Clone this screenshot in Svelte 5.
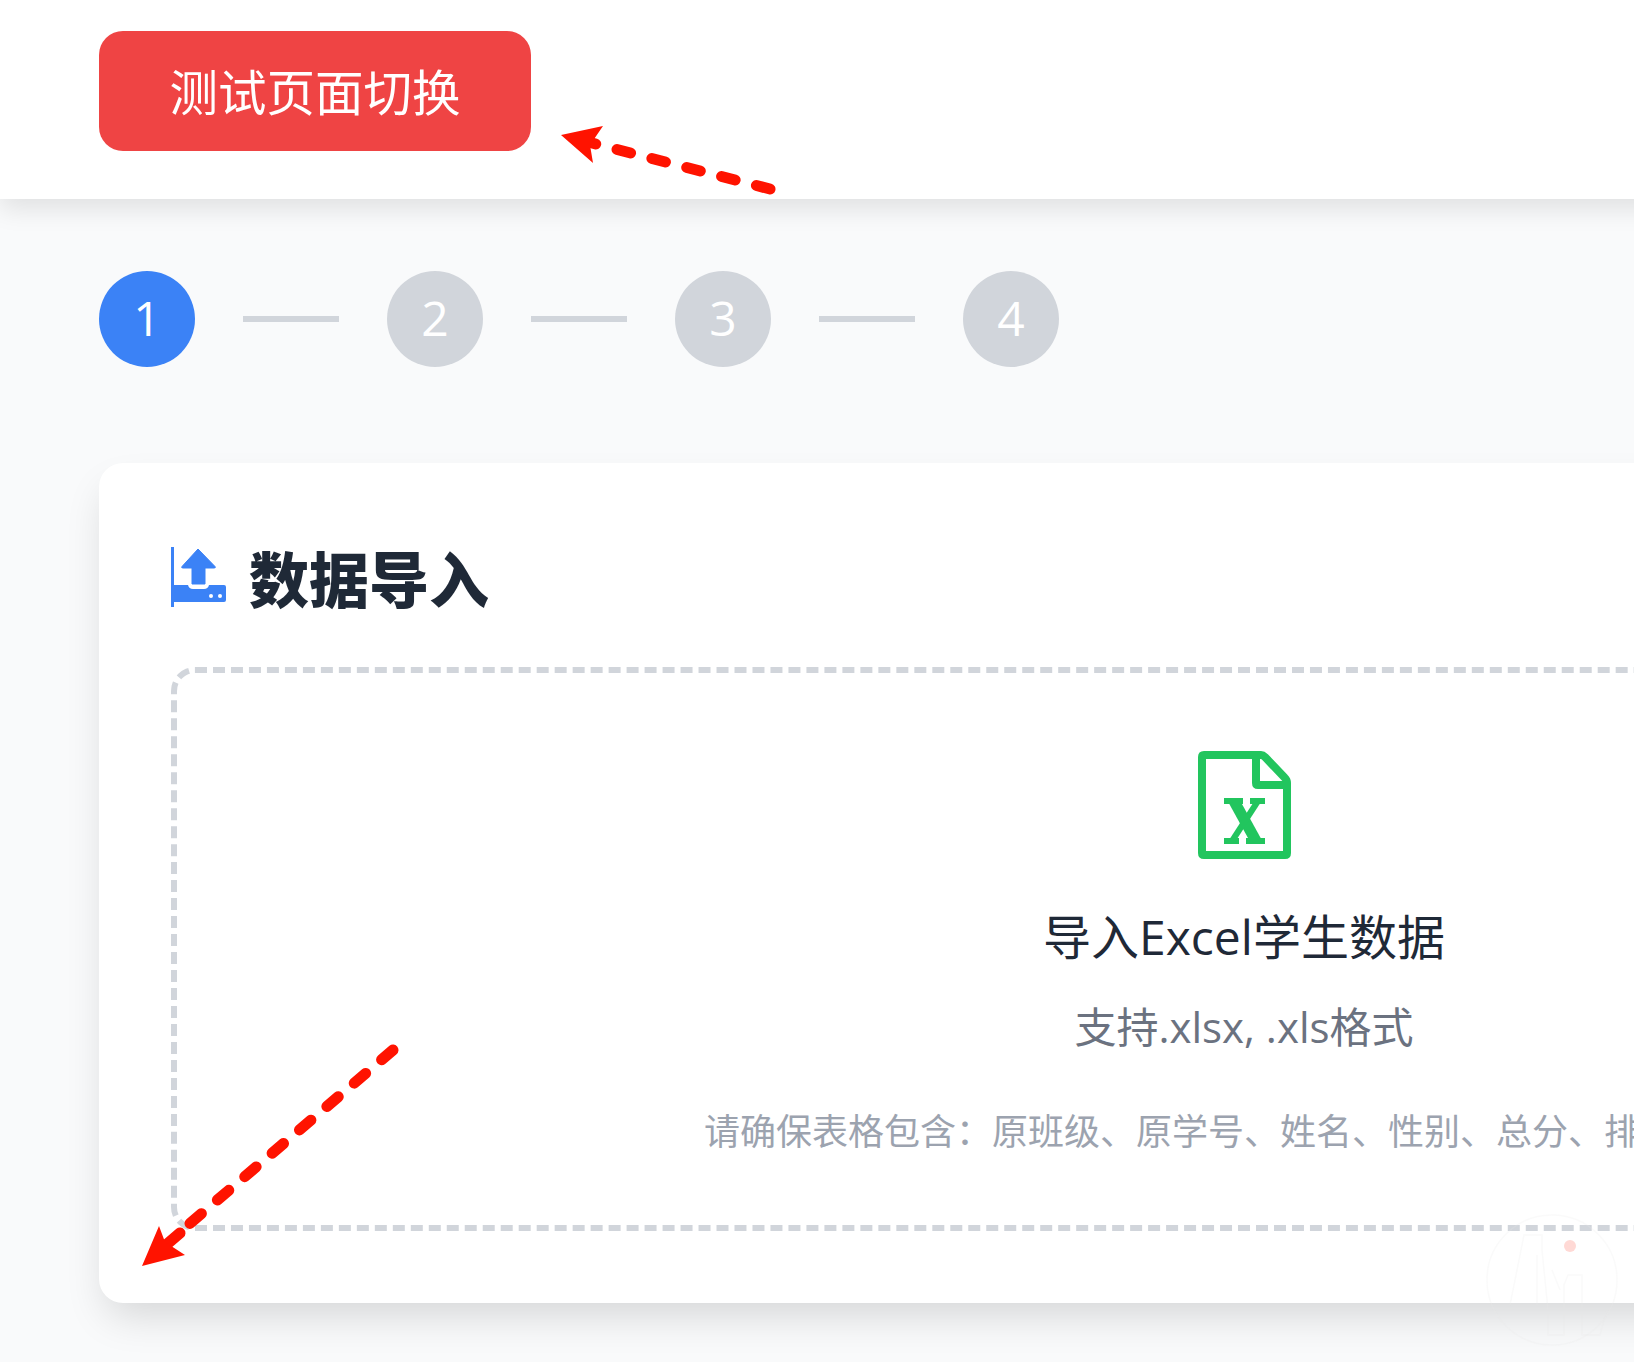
<script>
	var steps = [1, 2, 3, 4];
	var current = 1;
</script>

<div class="viewport">
	<div class="page">
		<header class="topbar">
			<button class="switch-btn"><span class="btn-label">测试页面切换</span></button>
		</header>

		<main class="content">
			<div class="steps">
				{#each steps as step, i}
					{#if i > 0}
						<span class="step-line"></span>
					{/if}
					<span class="step" class:active={step === current}><span class="step-num">{step}</span></span>
				{/each}
			</div>

			<section class="card">
				<h2 class="card-title">
					<svg class="title-icon" width="56" height="60" viewBox="0 0 56 60">
						<rect x="0" y="0" width="3" height="60" fill="#3b82f6" />
						<path d="M27 2 L44 19.500 Q45 21 43 21 H34 V37 H21 V21 H12 Q10 21 11 19.500 Z" fill="#3b82f6" stroke="#3b82f6" stroke-linejoin="round" />
						<path d="M0 38 H17 Q18 42 22 42 H33 Q37 42 38 38 H53 Q55 38 55 40 V53 Q55 55 53 55 H0 Z" fill="#3b82f6" />
						<circle cx="40" cy="49" r="2" fill="#fff" />
						<circle cx="49" cy="49" r="2" fill="#fff" />
					</svg>
					数据导入
				</h2>

				<div class="dropzone">
					<svg class="excel-icon" width="93" height="108" viewBox="0 0 93 108">
						<path d="M6 4 H63 Q65 4 67 6 L87 27 Q89 29 89 32 V102 Q89 104 87 104 H6 Q4 104 4 102 V6 Q4 4 6 4 Z" fill="none" stroke="#22c55e" stroke-width="8" stroke-linejoin="round" />
						<path d="M58 4 V32 Q58 34 60 34 H89" fill="none" stroke="#22c55e" stroke-width="8" stroke-linejoin="round" />
						<g fill="#22c55e">
							<rect x="26" y="47" width="19" height="6" />
							<rect x="52" y="47" width="15" height="6" />
							<rect x="26" y="87" width="15" height="6" />
							<rect x="48" y="87" width="19" height="6" />
						</g>
						<path d="M36 50 L58 90" stroke="#22c55e" stroke-width="11" />
						<path d="M60 50 L34 90" stroke="#22c55e" stroke-width="6" />
					</svg>
					<p class="drop-title">导入Excel学生数据</p>
					<p class="drop-sub">支持.xlsx, .xls格式</p>
					<p class="drop-hint">请确保表格包含：原班级、原学号、姓名、性别、总分、排名等信息</p>
				</div>
			</section>
		</main>

		<!-- annotation arrows drawn over the screenshot -->
		<svg class="arrows" width="1634" height="1362" viewBox="0 0 1634 1362">
			<path d="M770 189 L592 143" fill="none" stroke="#ff1300" stroke-width="11" stroke-linecap="round" stroke-dasharray="14 22" />
			<path d="M561 135 L603 126 L590 145 L593 163 Z" fill="#ff1300" />
			<path d="M393 1050 L187 1226" fill="none" stroke="#ff1300" stroke-width="11" stroke-linecap="round" stroke-dasharray="15 21" />
			<path d="M180 1233 L166 1245" fill="none" stroke="#ff1300" stroke-width="11" stroke-linecap="round" />
			<path d="M142 1266 L159 1226 L165 1242 L185 1255 Z" fill="#ff1300" />
		</svg>

		<!-- faint watermark in the corner -->
		<svg class="watermark" width="140" height="140" viewBox="0 0 140 140">
			<g fill="none" stroke="#e6e6e6" stroke-opacity="0.22" stroke-width="1.500">
				<circle cx="70" cy="70" r="65" />
				<path d="M28 95 L42 25 H60 V40 L66 100 V125 H82 V75 L86 65 H100 V125 H118 L125 100" />
				<path d="M55 45 V95 M70 60 L78 80" />
			</g>
			<circle cx="88" cy="36" r="6" fill="#ffd9d5" />
		</svg>
	</div>
</div>

<style>
	:global(body) {
		background: #f9fafb;
		overflow: hidden;
	}

	.viewport {
		width: 100vw;
		height: 100vh;
		overflow: hidden;
	}

	.page {
		position: relative;
		width: 2488px;
		min-height: 1362px;
		background: #f9fafb;
		font-family: "Open Sans", "Noto Sans CJK SC", sans-serif;
	}

	.topbar {
		background: #fff;
		padding: 31px 99px 48px;
		box-shadow: 0 10px 24px rgba(0, 0, 0, 0.1);
		position: relative;
	}

	.switch-btn {
		display: block;
		width: 432px;
		height: 120px;
		background: #ef4444;
		color: #fff;
		border: none;
		border-radius: 24px;
		font-family: inherit;
		font-size: 48.500px;
		padding: 0;
	}

	.btn-label {
		display: block;
		margin-top: -2px;
	}

	.steps {
		display: flex;
		align-items: center;
		gap: 48px;
		margin-bottom: 96px;
	}

	.content {
		padding: 72px 99px;
	}

	.step {
		width: 96px;
		height: 96px;
		border-radius: 50%;
		background: #d1d5db;
		color: #fff;
		font-size: 48px;
		display: flex;
		align-items: center;
		justify-content: center;
	}

	.step-num {
		margin-top: -4px;
	}

	.step.active {
		background: #3b82f6;
	}

	.step-line {
		width: 96px;
		height: 6px;
		background: #d1d5db;
	}

	.card {
		background: #fff;
		border-radius: 24px;
		padding: 72px;
		box-shadow: 0 20px 40px -8px rgba(0, 0, 0, 0.15);
		height: 840px;
		box-sizing: border-box;
	}

	.card-title {
		display: flex;
		align-items: center;
		gap: 22px;
		margin: 12px 0 60px;
		height: 60px;
		font-size: 60px;
		font-weight: 900;
		color: #1f2937;
	}

	.title-icon {
		flex: none;
	}

	.dropzone {
		border: 6px dashed #d1d5db;
		border-radius: 24px;
		height: 564px;
		box-sizing: border-box;
		padding-top: 78px;
		display: flex;
		flex-direction: column;
		align-items: center;
	}

	.drop-title {
		margin: 42px 0 0;
		font-size: 48px;
		line-height: 72px;
		color: #1f2937;
	}

	.drop-sub {
		margin: 18px 0 0;
		font-size: 42px;
		line-height: 72px;
		color: #6b7280;
	}

	.drop-hint {
		margin: 42px 0 0;
		font-size: 36px;
		line-height: 54px;
		color: #9ca3af;
	}

	.arrows {
		position: absolute;
		left: 0;
		top: 0;
		pointer-events: none;
	}

	.watermark {
		position: absolute;
		left: 1482px;
		top: 1210px;
		pointer-events: none;
	}
</style>
